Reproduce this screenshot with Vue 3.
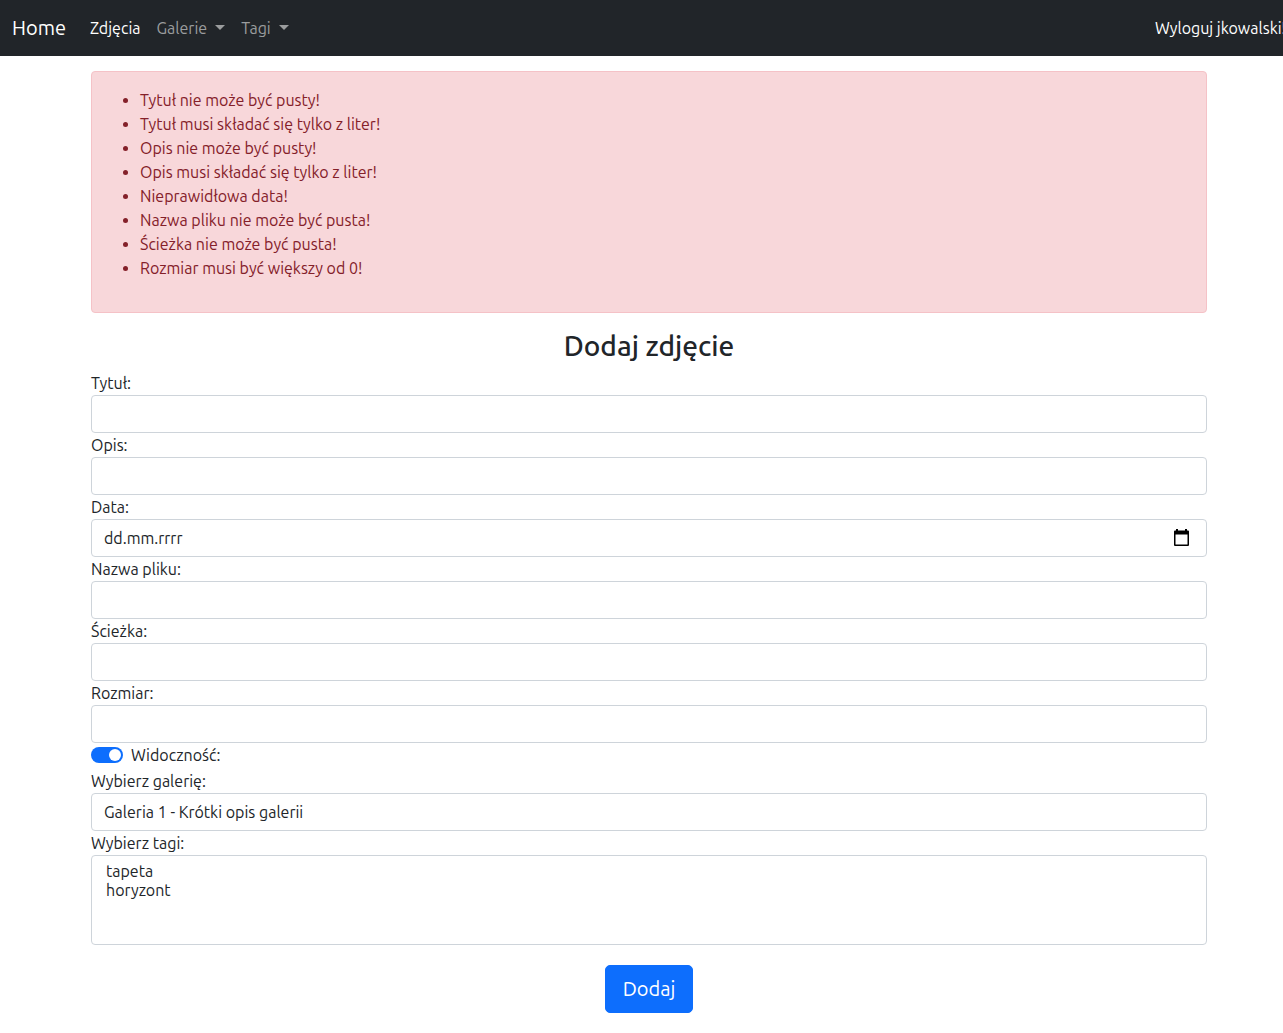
<script setup>
import { ref } from 'vue'

const errors = [
  'Tytuł nie może być pusty!',
  'Tytuł musi składać się tylko z liter!',
  'Opis nie może być pusty!',
  'Opis musi składać się tylko z liter!',
  'Nieprawidłowa data!',
  'Nazwa pliku nie może być pusta!',
  'Ścieżka nie może być pusta!',
  'Rozmiar musi być większy od 0!',
]

const fields = [
  { id: 'title', label: 'Tytuł:' },
  { id: 'description', label: 'Opis:' },
  { id: 'date', label: 'Data:', date: true },
  { id: 'filename', label: 'Nazwa pliku:' },
  { id: 'path', label: 'Ścieżka:' },
  { id: 'size', label: 'Rozmiar:' },
]

const form = ref({ title: '', description: '', date: '', filename: '', path: '', size: '' })
const visible = ref(true)
const gallery = ref('1')
const selectedTags = ref([])
const tags = ['tapeta', 'horyzont']
</script>

<template>
  <div class="page">
    <nav class="navbar">
      <a class="brand" href="#">Home</a>
      <a class="nav-link active" href="#">Zdjęcia</a>
      <a class="nav-link dropdown" href="#">Galerie</a>
      <a class="nav-link dropdown" href="#">Tagi</a>
      <a class="logout" href="#">Wyloguj jkowalski!</a>
    </nav>

    <main class="container">
      <div class="alert" role="alert">
        <ul>
          <li v-for="error in errors" :key="error">{{ error }}</li>
        </ul>
      </div>

      <h1>Dodaj zdjęcie</h1>

      <form @submit.prevent>
        <div v-for="field in fields" :key="field.id" class="field">
          <label :for="field.id">{{ field.label }}</label>
          <div v-if="field.date" class="control date-control">
            <input :id="field.id" v-model="form[field.id]" type="text" placeholder="dd.mm.rrrr" />
            <button class="picker" type="button" aria-label="Kalendarz">
              <svg viewBox="0 0 15 17" width="15" height="17" aria-hidden="true">
                <path d="M2 0h2v1.500h7V0h2v1.500h1q1 0 1 1V16q0 1-1 1H1q-1 0-1-1V2.500q0-1 1-1h1zM1.500 5.500v10h12v-10z" fill-rule="evenodd" />
              </svg>
            </button>
          </div>
          <input v-else :id="field.id" v-model="form[field.id]" class="control" type="text" />
        </div>

        <div class="switch">
          <input id="visible" v-model="visible" type="checkbox" role="switch" />
          <label for="visible">Widoczność:</label>
        </div>

        <div class="field">
          <label for="gallery">Wybierz galerię:</label>
          <select id="gallery" v-model="gallery" class="control">
            <option value="1">Galeria 1 - Krótki opis galerii</option>
          </select>
        </div>

        <div class="field">
          <label for="tags">Wybierz tagi:</label>
          <select id="tags" v-model="selectedTags" class="control tags" multiple>
            <option v-for="tag in tags" :key="tag" :value="tag">{{ tag }}</option>
          </select>
        </div>

        <button class="submit" type="submit">Dodaj</button>
      </form>
    </main>
  </div>
</template>

<style>
body {
  margin: 0;
  overflow-x: hidden;
  background: #fff;
}
</style>

<style scoped>
.page,
.page * {
  box-sizing: border-box;
}

/* The bar and the centred column run slightly past the right window edge. */
.page {
  width: calc(100% + 15px);
  font-family: Ubuntu, "Noto Sans", sans-serif;
  font-size: 16px;
  line-height: 24px;
  color: #212529;
}

.navbar {
  display: flex;
  align-items: center;
  height: 56px;
  padding: 0 12px;
  background: #212529;
}

.navbar a {
  text-decoration: none;
  white-space: nowrap;
}

.brand {
  margin-right: 16px;
  font-size: 20px;
  color: #fff;
}

.nav-link {
  padding: 8px;
  color: #9b9d9e;
}

.nav-link.active,
.navbar .logout {
  color: #fff;
}

.dropdown::after {
  content: "";
  display: inline-block;
  margin-left: 8px;
  vertical-align: 4px;
  border-top: 5px solid;
  border-right: 5px solid transparent;
  border-left: 5px solid transparent;
}

.logout {
  margin-left: auto;
}

.container {
  max-width: 1140px;
  margin: 15px auto 0;
  padding: 0 12px 20px;
}

.alert {
  margin-bottom: 16px;
  padding: 16px;
  border: 1px solid #f5c2c7;
  border-radius: 4px;
  background: #f8d7da;
  color: #842029;
}

.alert ul {
  margin: 0 0 16px;
  padding-left: 32px;
}

h1 {
  margin: 0 0 8px;
  font-size: 28px;
  font-weight: 500;
  line-height: 34px;
  text-align: center;
}

form {
  display: flex;
  flex-direction: column;
}

.field label {
  display: block;
}

.control {
  display: block;
  width: 100%;
  height: 38px;
  margin: 0;
  padding: 6px 12px;
  border: 1px solid #ced4da;
  border-radius: 4px;
  outline: 0;
  appearance: none;
  background: #fff;
  color: #212529;
  font: inherit;
}

.date-control {
  display: flex;
  align-items: center;
  padding-right: 17px;
}

.date-control input {
  flex: 1;
  min-width: 0;
  padding: 0;
  border: 0;
  outline: 0;
  background: none;
  color: inherit;
  font: inherit;
}

.date-control input::placeholder {
  color: #212529;
  opacity: 1;
}

.picker {
  display: flex;
  padding: 0 0 2px;
  border: 0;
  background: none;
  color: #000;
}

.switch {
  display: flex;
  align-items: center;
  gap: 8px;
  min-height: 24px;
  margin-bottom: 2px;
}

.switch input {
  display: flex;
  align-items: center;
  width: 32px;
  height: 16px;
  margin: 0;
  padding: 0 2px;
  border-radius: 8px;
  appearance: none;
  background: #adb5bd;
}

.switch input::before {
  content: "";
  width: 12px;
  height: 12px;
  border-radius: 50%;
  background: #fff;
}

.switch input:checked {
  justify-content: flex-end;
  background: #0d6efd;
}

.tags {
  height: 90px;
}

.tags option {
  min-height: 19px;
  padding: 0 2px;
  line-height: 19px;
}

.submit {
  align-self: center;
  margin-top: 20px;
  padding: 8px 17px;
  border: 1px solid #0d6efd;
  border-radius: 5px;
  background: #0d6efd;
  color: #fff;
  font: inherit;
  font-size: 20px;
  line-height: 30px;
}
</style>
